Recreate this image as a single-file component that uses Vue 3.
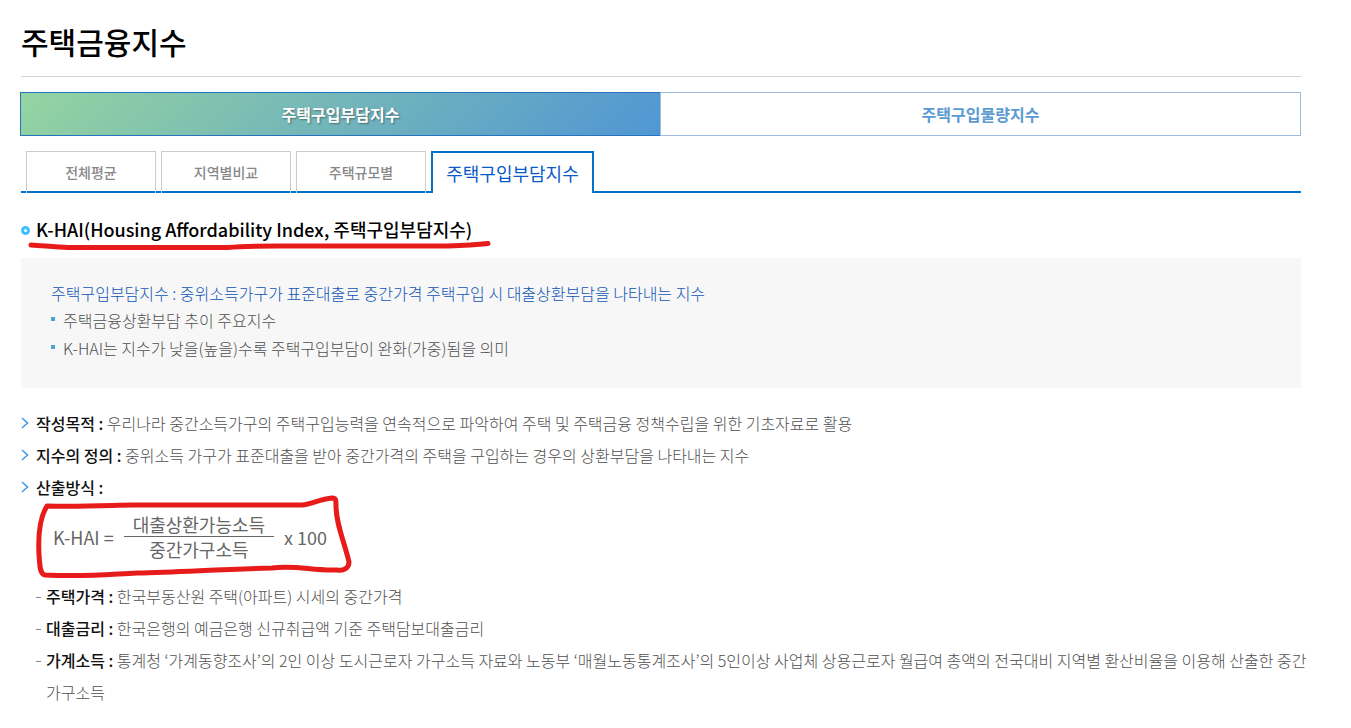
<script setup>
const mainTabs = [
  { label: '주택구입부담지수', active: true },
  { label: '주택구입물량지수', active: false },
]

const subTabs = [
  { label: '전체평균', active: false },
  { label: '지역별비교', active: false },
  { label: '주택규모별', active: false },
  { label: '주택구입부담지수', active: true },
]

const summary = [
  '주택금융상환부담 추이 주요지수',
  'K-HAI는 지수가 낮을(높을)수록 주택구입부담이 완화(가중)됨을 의미',
]

const details = [
  { term: '작성목적 :', text: '우리나라 중간소득가구의 주택구입능력을 연속적으로 파악하여 주택 및 주택금융 정책수립을 위한 기초자료로 활용' },
  { term: '지수의 정의 :', text: '중위소득 가구가 표준대출을 받아 중간가격의 주택을 구입하는 경우의 상환부담을 나타내는 지수' },
  { term: '산출방식 :', text: '' },
]

const notes = [
  { term: '주택가격 :', text: '한국부동산원 주택(아파트) 시세의 중간가격' },
  { term: '대출금리 :', text: '한국은행의 예금은행 신규취급액 기준 주택담보대출금리' },
  { term: '가계소득 :', text: '통계청 ‘가계동향조사’의 2인 이상 도시근로자 가구소득 자료와 노동부 ‘매월노동통계조사’의 5인이상 사업체 상용근로자 월급여 총액의 전국대비 지역별 환산비율을 이용해 산출한 중간 가구소득' },
]
</script>

<template>
  <main class="page">
    <h1 class="title">주택금융지수</h1>

    <nav class="main-tabs" aria-label="지수 종류">
      <a v-for="tab in mainTabs" :key="tab.label" href="#" class="main-tab" :class="{ active: tab.active }">{{ tab.label }}</a>
    </nav>

    <nav class="sub-tabs" aria-label="세부 항목">
      <a v-for="tab in subTabs" :key="tab.label" href="#" class="sub-tab" :class="{ active: tab.active }">{{ tab.label }}</a>
    </nav>

    <h2 class="heading">
      K-HAI(Housing Affordability Index, 주택구입부담지수)
      <svg class="underline" width="464" height="12" viewBox="0 0 464 12" aria-hidden="true">
        <path d="M3 5 C18 6 28 7 40 7.500 H200 C215 6 230 6 250 6 H420 C435 5.500 446 5 460 3.500" />
      </svg>
    </h2>

    <section class="summary">
      <p class="lead">주택구입부담지수 : 중위소득가구가 표준대출로 중간가격 주택구입 시 대출상환부담을 나타내는 지수</p>
      <ul class="points">
        <li v-for="item in summary" :key="item">{{ item }}</li>
      </ul>
    </section>

    <ul class="details">
      <li v-for="item in details" :key="item.term">
        <svg class="chevron" width="8" height="12" viewBox="0 0 8 12" aria-hidden="true"><path d="M1 1 L6.500 6 L1 11" /></svg>
        <strong>{{ item.term }}</strong> {{ item.text }}
      </li>
    </ul>

    <div class="formula">
      <span>K-HAI =</span>
      <span class="fraction">
        <span class="numerator">대출상환가능소득</span>
        <span class="denominator">중간가구소득</span>
      </span>
      <span>x 100</span>
      <svg class="outline" width="320" height="86" viewBox="0 0 320 86" aria-hidden="true">
        <path d="M15 11 C50 12 85 10 100 10 H270 C280 9 288 4 300 3 C304 3 304 5 304 10 C304 30 312 45 317 67 C317 73 312 76 305 75 C280 76 265 70 240 73 C190 74 150 77 105 78 C80 79 55 82 13 80 C7 79 8 68 7 60 C6 40 8 22 15 11 Z" />
      </svg>
    </div>

    <ul class="notes">
      <li v-for="item in notes" :key="item.term"><strong>{{ item.term }}</strong> {{ item.text }}</li>
    </ul>
  </main>
</template>

<style>
body {
  margin: 0;
  background: #fff;
}
</style>

<style scoped>
.page {
  padding: 16px 50px 16px 21px;
  font-family: "Noto Sans CJK KR", "Noto Sans", sans-serif;
  font-size: 16px;
  font-weight: 300;
  line-height: 32px;
  word-break: keep-all;
  color: #505050;
}

ul,
p,
h1,
h2 {
  margin: 0;
  padding: 0;
  list-style: none;
}

a {
  text-decoration: none;
}

strong {
  font-weight: 500;
  color: #111;
}

.title {
  padding-bottom: 10px;
  border-bottom: 1px solid #d2d2d2;
  font-size: 30px;
  font-weight: 500;
  line-height: 50px;
  color: #000;
}

.main-tabs {
  display: flex;
  margin: 15px 0 0 -1px;
}

.main-tab {
  flex: 1;
  border: 1px solid #9bbcdd;
  font-weight: 700;
  line-height: 42px;
  text-align: center;
  color: #5b9bd1;
}

.main-tab.active {
  border-color: #2674bd;
  border-right: 0;
  background: linear-gradient(135deg, #95d4a0, #5096d4);
  color: #fff;
  text-shadow: 1px 1px 2px rgba(0, 0, 0, 0.4);
}

.sub-tabs {
  display: flex;
  gap: 5px;
  margin-top: 15px;
  padding-left: 5px;
  border-bottom: 2px solid #0072ca;
}

.sub-tab {
  box-sizing: border-box;
  width: 130px;
  height: 42px;
  margin-bottom: -2px;
  border: 1px solid #ccc;
  border-bottom: 0;
  font-size: 14px;
  font-weight: 500;
  line-height: 40px;
  text-align: center;
  color: #888;
}

.sub-tab.active {
  width: 163px;
  border: 2px solid #0072ca;
  border-bottom: 0;
  background: #fff;
  font-size: 18px;
  font-weight: 400;
  color: #0a5ac8;
}

.heading {
  position: relative;
  margin-top: 20px;
  padding-left: 15px;
  font-size: 18px;
  font-weight: 500;
  line-height: 32px;
  color: #000;
}

.heading::before {
  content: "";
  position: absolute;
  left: 0;
  top: 13px;
  box-sizing: border-box;
  width: 9px;
  height: 9px;
  border: 3px solid #40c0ff;
  border-radius: 50%;
}

.underline {
  position: absolute;
  left: 7px;
  top: 27px;
}

.underline path,
.outline path {
  fill: none;
  stroke: #e81b1b;
  stroke-width: 5;
  stroke-linecap: round;
  stroke-linejoin: round;
}

.summary {
  margin-top: 13px;
  padding: 22px 30px 26px;
  background: #f7f7f7;
  line-height: 28px;
}

.lead {
  line-height: 26px;
  color: #0f55b5;
}

.points li {
  position: relative;
  padding-left: 12px;
}

.points li::before {
  content: "";
  position: absolute;
  left: 0;
  top: 11px;
  width: 4px;
  height: 4px;
  background: #4da3c8;
}

.details {
  margin-top: 19px;
}

.details li {
  position: relative;
  padding-left: 15px;
}

.chevron {
  position: absolute;
  left: 0;
  top: 10px;
}

.chevron path {
  fill: none;
  stroke: #3d98f0;
  stroke-width: 1.5;
}

.formula {
  position: relative;
  display: flex;
  align-items: center;
  gap: 10px;
  padding: 9px 0 19px 32px;
  font-size: 18px;
  font-weight: 400;
  line-height: 24px;
  color: #666;
}

.fraction {
  display: flex;
  flex-direction: column;
  text-align: center;
}

.numerator {
  padding: 0 9px;
  border-bottom: 1px solid #666;
}

.outline {
  position: absolute;
  left: 11px;
  top: -8px;
}

.notes {
  margin-right: -32px;
  padding-left: 15px;
}

.notes li {
  position: relative;
  padding-left: 10px;
}

.notes li::before {
  content: "";
  position: absolute;
  left: 0;
  top: 17px;
  width: 5px;
  height: 1px;
  background: #888;
}
</style>
